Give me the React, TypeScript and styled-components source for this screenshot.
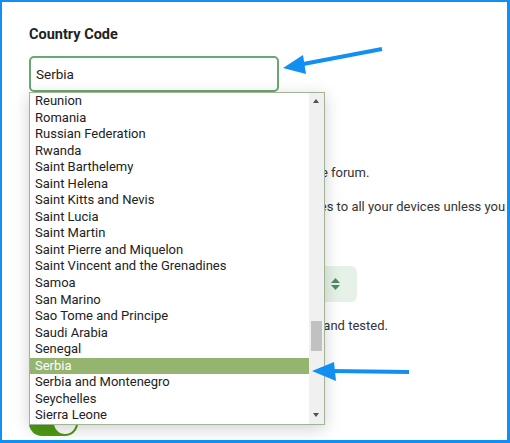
import styled, { createGlobalStyle } from 'styled-components'

const GlobalStyle = createGlobalStyle`
  html, body {
    margin: 0;
    padding: 0;
    background: #ffffff;
  }
  body {
    font-family: Roboto, 'Noto Sans', sans-serif;
    color: #222;
  }
`

const countries = [
  'Reunion',
  'Romania',
  'Russian Federation',
  'Rwanda',
  'Saint Barthelemy',
  'Saint Helena',
  'Saint Kitts and Nevis',
  'Saint Lucia',
  'Saint Martin',
  'Saint Pierre and Miquelon',
  'Saint Vincent and the Grenadines',
  'Samoa',
  'San Marino',
  'Sao Tome and Principe',
  'Saudi Arabia',
  'Senegal',
  'Serbia',
  'Serbia and Montenegro',
  'Seychelles',
  'Sierra Leone',
]

const Frame = styled.div`
  position: relative;
  width: 510px;
  height: 443px;
  box-sizing: border-box;
  border-style: solid;
  border-color: #118ff3;
  border-width: 2px 3px 3px 2px;
  overflow: hidden;
  background: #fff;
`

const Content = styled.div`
  width: 620px;
  padding: 23px 0 0 27px;
  display: flex;
  flex-direction: column;
  align-items: flex-start;
`

const Label = styled.div`
  font-size: 14.5px;
  line-height: 20px;
  font-weight: 700;
  color: #222;
`

const Help = styled.p<{ $gap: number }>`
  margin: ${p => p.$gap}px 0 0;
  font-size: 13px;
  line-height: 20px;
  color: #333;
  white-space: nowrap;
`

const Field = styled.div`
  position: relative;
  margin-top: 11px;
  z-index: 2;
`

const Input = styled.div`
  width: 250px;
  height: 36px;
  box-sizing: border-box;
  border: 2px solid #68a872;
  border-radius: 5px;
  padding: 0 5px;
  display: flex;
  align-items: center;
  font-size: 13.5px;
  color: #222;
  background: #fff;
`

const Dropdown = styled.div`
  position: absolute;
  top: 36px;
  left: 0;
  width: 296px;
  height: 333px;
  box-sizing: border-box;
  border: 1px solid #a2b496;
  background: #fff;
  box-shadow: 0 4px 16px rgba(0, 0, 0, 0.18);
  display: flex;
`

const List = styled.div`
  flex: 1;
  display: flex;
  flex-direction: column;
`

const Option = styled.div<{ $selected?: boolean }>`
  height: 16.55px;
  line-height: 16.55px;
  padding-left: 5px;
  font-size: 13px;
  white-space: nowrap;
  color: ${p => (p.$selected ? '#ffffff' : '#222')};
  background: ${p => (p.$selected ? '#94b470' : 'transparent')};
`

const Scrollbar = styled.div`
  width: 15px;
  background: #f0f0f0;
  position: relative;
`

const Arrow = styled.div<{ $down?: boolean }>`
  position: absolute;
  left: 4px;
  ${p => (p.$down ? 'bottom: 7px;' : 'top: 6px;')}
  width: 0;
  height: 0;
  border-left: 3.5px solid transparent;
  border-right: 3.5px solid transparent;
  ${p => (p.$down ? 'border-top: 4px solid #505050;' : 'border-bottom: 4px solid #505050;')}
`

const Thumb = styled.div`
  position: absolute;
  left: 2px;
  top: 228px;
  width: 11px;
  height: 30px;
  background: #c1c1c1;
`

const Spacer = styled.div<{ $h: number }>`
  height: ${p => p.$h}px;
`

const SelectBox = styled.div`
  width: 328px;
  height: 36px;
  box-sizing: border-box;
  border-radius: 6px;
  background: #e6f2e7;
  display: flex;
  align-items: center;
  justify-content: flex-end;
  padding-right: 17px;
`

const Toggle = styled.div<{ $on?: boolean }>`
  width: 49px;
  height: 26px;
  border-radius: 13px;
  background: ${p => (p.$on ? '#4f9a14' : '#ccc')};
  position: relative;
  &::after {
    content: '';
    position: absolute;
    top: 2px;
    left: ${p => (p.$on ? '25px' : '2px')};
    width: 22px;
    height: 22px;
    border-radius: 50%;
    background: #fff;
  }
`

const Overlay = styled.svg`
  position: absolute;
  top: -2px;
  left: -2px;
  width: 510px;
  height: 443px;
  pointer-events: none;
  z-index: 5;
`

function SortIcon() {
  return (
    <svg width="9" height="12" viewBox="0 0 9 12">
      <polygon points="4.5,0 9,5 0,5" fill="#4a8d62" />
      <polygon points="0,7 9,7 4.5,12" fill="#4a8d62" />
    </svg>
  )
}

export default function App() {
  return (
    <>
      <GlobalStyle />
      <Frame>
        <Content>
          <Label>Country Code</Label>
          <Field>
            <Input>Serbia</Input>
            <Dropdown>
              <List>
                {countries.map(c => (
                  <Option key={c} $selected={c === 'Serbia'}>
                    {c}
                  </Option>
                ))}
              </List>
              <Scrollbar>
                <Arrow />
                <Thumb />
                <Arrow $down />
              </Scrollbar>
            </Dropdown>
          </Field>
          <Spacer $h={58} />
          <Help $gap={13}>Your country flag is shown next to your name on the forum.</Help>
          <Help $gap={14}>The theme, font size and layout you pick here applies to all your devices unless you change them.</Help>
          <Spacer $h={49} />
          <SelectBox>
            <SortIcon />
          </SelectBox>
          <Help $gap={14}>Beta builds get new features earlier, once reviewed and tested.</Help>
          <Spacer $h={74} />
          <Toggle $on />
        </Content>
        <Overlay viewBox="0 0 510 443">
          <line x1="382" y1="49" x2="298" y2="65" stroke="#118ff3" strokeWidth="4" />
          <polygon points="283,68 303,55 306,74" fill="#118ff3" />
          <line x1="409" y1="372" x2="330" y2="371" stroke="#118ff3" strokeWidth="4" />
          <polygon points="312,371 334,362 336,381" fill="#118ff3" />
        </Overlay>
      </Frame>
    </>
  )
}
